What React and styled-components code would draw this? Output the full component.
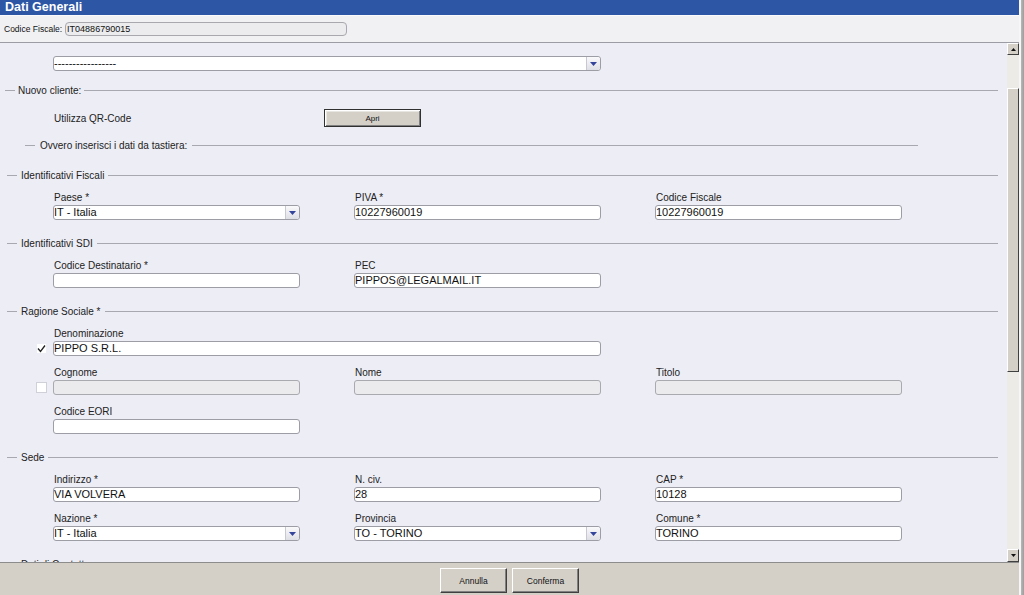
import React from 'react';
import styled, { createGlobalStyle } from 'styled-components';

const GlobalStyle = createGlobalStyle`
  html, body {
    margin: 0;
    padding: 0;
    background: #d4d0c8;
    font-family: "Liberation Sans", Arial, sans-serif;
  }
  * { box-sizing: border-box; }
`;

const Window = styled.div`
  display: flex;
  width: 1024px;
  height: 595px;
  overflow: hidden;
`;

const Main = styled.div`
  display: flex;
  flex-direction: column;
  width: 1019px;
  height: 100%;
`;

const Frame = styled.div`
  width: 5px;
  height: 100%;
  background: linear-gradient(to right, #f6f6f6 0, #f6f6f6 2px, #b8b8b8 2px, #9c9c9c 5px);
`;

const TitleBar = styled.div`
  height: 15px;
  background: #2d56a5;
  color: #fff;
  font-size: 12.5px;
  font-weight: bold;
  line-height: 14px;
  padding-left: 5px;
  white-space: nowrap;
`;

const CfBar = styled.div`
  display: flex;
  align-items: center;
  height: 28px;
  border-top: 1px solid #fafafc;
  border-bottom: 1px solid #9c9ca4;
  background: #f1f1f4;
  padding-left: 4px;
  gap: 3px;
`;

const CfLabel = styled.span`
  font-size: 8.5px;
  color: #111;
`;

const CfValue = styled.div`
  width: 282px;
  height: 14px;
  border: 1px solid #a8a8ae;
  border-radius: 4px;
  background: #ececee;
  font-size: 9px;
  line-height: 12px;
  padding-left: 1px;
  color: #111;
`;

const Body = styled.div`
  display: flex;
  flex: 1;
  min-height: 0;
`;

const Scroll = styled.div`
  flex: 1;
  overflow: hidden;
  background: #ededf5;
  padding-top: 13px;
`;

const ScrollBar = styled.div`
  display: flex;
  flex-direction: column;
  width: 12px;
  background: #ecebe5;
`;

const ArrowBtn = styled.div`
  display: flex;
  align-items: center;
  justify-content: center;
  height: ${(p) => p.$h}px;
  background: #d4d0c8;
  border-top: 1px solid #fff;
  border-left: 1px solid #fff;
  border-right: 1px solid #404040;
  border-bottom: 1px solid #404040;
`;

const TrackGap = styled.div`
  height: ${(p) => p.$h}px;
  flex: ${(p) => (p.$grow ? 1 : 'none')};
`;

const Thumb = styled.div`
  height: 284px;
  background: #d4d0c8;
  border-top: 1px solid #fff;
  border-left: 1px solid #fff;
  border-right: 1px solid #404040;
  border-bottom: 1px solid #404040;
`;

const Footer = styled.div`
  display: flex;
  justify-content: center;
  gap: 5px;
  height: 33px;
  padding-top: 5px;
  background: #d4d0c8;
  border-top: 1px solid #8c8c8c;
`;

const Button = styled.button`
  width: 67px;
  height: 25px;
  padding: 0;
  background: #d4d0c8;
  border-style: solid;
  border-width: 1px;
  border-color: #fff #404040 #404040 #fff;
  box-shadow: inset -1px -1px 0 #808080;
  font-family: "Liberation Sans", Arial, sans-serif;
  font-size: 8.5px;
  color: #111;
`;

const LegendRow = styled.div`
  display: flex;
  align-items: center;
  height: 14px;
  margin: ${(p) => p.$mt || 0}px ${(p) => p.$end}px 0 ${(p) => p.$start}px;
`;

const LegendLead = styled.span`
  width: 10px;
  border-top: 1px solid #a8a8b0;
`;

const LegendText = styled.span`
  font-size: 10px;
  color: #222;
  padding: 0 ${(p) => p.$gap}px;
  white-space: nowrap;
`;

const LegendLine = styled.span`
  flex: 1;
  border-top: 1px solid #a8a8b0;
`;

const Legend = ({ children, start = 7, end = 9, gap = 4, mt }) => (
  <LegendRow $start={start} $end={end} $mt={mt}>
    <LegendLead />
    <LegendText $gap={gap}>{children}</LegendText>
    <LegendLine />
  </LegendRow>
);

const Section = styled.div`
  display: flex;
  flex-direction: column;
  gap: 8px;
  margin-top: ${(p) => p.$mt || 0}px;
`;

const SectionRows = styled.div`
  display: flex;
  flex-direction: column;
  gap: 8px;
  margin-top: -1px;
`;

const Row = styled.div`
  display: flex;
`;

const Lead = styled.div`
  display: flex;
  align-items: flex-end;
  width: 53px;
  padding-left: 36px;
  padding-bottom: 2px;
`;

const Grid = styled.div`
  display: grid;
  grid-template-columns: repeat(3, 247px);
  column-gap: 54px;
`;

const Field = styled.div`
  display: flex;
  flex-direction: column;
  grid-column: span ${(p) => p.$span || 1};
`;

const Label = styled.div`
  height: 12px;
  line-height: 12px;
  margin-top: 3px;
  margin-bottom: 1px;
  padding-left: 1px;
  font-size: 10px;
  color: #222;
  white-space: nowrap;
`;

const Box = styled.div`
  display: flex;
  align-items: center;
  height: 15px;
  border: 1px solid ${(p) => (p.$disabled ? '#a9a9b0' : '#9d9da6')};
  border-radius: 3px;
  background: ${(p) => (p.$disabled ? '#ebebee' : '#fff')};
  font-size: 11px;
  color: #111;
  white-space: nowrap;
  overflow: hidden;
`;

const BoxText = styled.span`
  flex: 1;
  line-height: 13px;
`;

const SelArrow = styled.span`
  display: flex;
  align-items: center;
  justify-content: center;
  width: 14px;
  height: 13px;
  border-left: 1px solid #c8c8d2;
  border-radius: 0 2px 2px 0;
  background: linear-gradient(#fafafc, #dedee6);
`;

const Check = styled.span`
  display: flex;
  align-items: center;
  justify-content: center;
  width: 11px;
  height: 11px;
  background: #fff;
  border: 1px solid ${(p) => (p.$checked ? '#ededf5' : '#d0d0d8')};
`;

const QrRow = styled.div`
  display: flex;
  align-items: center;
  height: 18px;
  margin-top: 12px;
  padding-left: 54px;
`;

const QrLabel = styled.span`
  width: 270px;
  font-size: 10px;
  color: #222;
`;

const OpenButton = styled.button`
  width: 97px;
  height: 18px;
  padding: 0;
  background: #d4d0c8;
  border: 1px solid #303030;
  box-shadow: inset 1px 1px 0 #fff, inset -1px -1px 0 #808080, inset 2px 2px 0 #e8e6e0;
  font-family: "Liberation Sans", Arial, sans-serif;
  font-size: 8px;
  color: #111;
`;

const Triangle = ({ up, color = '#111', w = 7, h = 4 }) => (
  <svg width={w} height={h} viewBox="0 0 7 4">
    {up ? <path d="M0 4 L3.5 0 L7 4 Z" fill={color} /> : <path d="M0 0 L7 0 L3.5 4 Z" fill={color} />}
  </svg>
);

const Input = ({ value = '', disabled }) => (
  <Box $disabled={disabled}>
    <BoxText>{value}</BoxText>
  </Box>
);

const Select = ({ value }) => (
  <Box>
    <BoxText>{value}</BoxText>
    <SelArrow>
      <Triangle color="#33449a" w={7} h={4} />
    </SelArrow>
  </Box>
);

const CheckBox = ({ checked }) => (
  <Check $checked={checked}>
    {checked && (
      <svg width="9" height="9" viewBox="0 0 9 9">
        <path d="M1 4.5 L3.5 7.5 L8 1.5" stroke="#222" strokeWidth="1.3" fill="none" />
      </svg>
    )}
  </Check>
);

const F = ({ label, children, span }) => (
  <Field $span={span}>
    <Label>{label}</Label>
    {children}
  </Field>
);

export default function App() {
  return (
    <>
      <GlobalStyle />
      <Window>
        <Main>
          <TitleBar>Dati Generali</TitleBar>
          <CfBar>
            <CfLabel>Codice Fiscale:</CfLabel>
            <CfValue>IT04886790015</CfValue>
          </CfBar>
          <Body>
            <Scroll>
              <Row>
                <Lead />
                <Grid>
                  <Field $span={2}>
                    <Select value="-----------------" />
                  </Field>
                </Grid>
              </Row>

              <Legend start={5} gap={3} mt={12}>Nuovo cliente:</Legend>
              <QrRow>
                <QrLabel>Utilizza QR-Code</QrLabel>
                <OpenButton>Apri</OpenButton>
              </QrRow>
              <Legend start={25} end={89} gap={5} mt={11}>Ovvero inserisci i dati da tastiera:</Legend>

              <Section $mt={16}>
                <Legend>Identificativi Fiscali</Legend>
                <SectionRows>
                  <Row>
                    <Lead />
                    <Grid>
                      <F label="Paese *"><Select value="IT - Italia" /></F>
                      <F label="PIVA *"><Input value="10227960019" /></F>
                      <F label="Codice Fiscale"><Input value="10227960019" /></F>
                    </Grid>
                  </Row>
                </SectionRows>
              </Section>

              <Section $mt={16}>
                <Legend>Identificativi SDI</Legend>
                <SectionRows>
                  <Row>
                    <Lead />
                    <Grid>
                      <F label="Codice Destinatario *"><Input /></F>
                      <F label="PEC"><Input value="PIPPOS@LEGALMAIL.IT" /></F>
                    </Grid>
                  </Row>
                </SectionRows>
              </Section>

              <Section $mt={16}>
                <Legend>Ragione Sociale *</Legend>
                <SectionRows>
                  <Row>
                    <Lead><CheckBox checked /></Lead>
                    <Grid>
                      <F label="Denominazione" span={2}><Input value="PIPPO S.R.L." /></F>
                    </Grid>
                  </Row>
                  <Row>
                    <Lead><CheckBox /></Lead>
                    <Grid>
                      <F label="Cognome"><Input disabled /></F>
                      <F label="Nome"><Input disabled /></F>
                      <F label="Titolo"><Input disabled /></F>
                    </Grid>
                  </Row>
                  <Row>
                    <Lead />
                    <Grid>
                      <F label="Codice EORI"><Input /></F>
                    </Grid>
                  </Row>
                </SectionRows>
              </Section>

              <Section $mt={16}>
                <Legend>Sede</Legend>
                <SectionRows>
                  <Row>
                    <Lead />
                    <Grid>
                      <F label="Indirizzo *"><Input value="VIA VOLVERA" /></F>
                      <F label="N. civ."><Input value="28" /></F>
                      <F label="CAP *"><Input value="10128" /></F>
                    </Grid>
                  </Row>
                  <Row>
                    <Lead />
                    <Grid>
                      <F label="Nazione *"><Select value="IT - Italia" /></F>
                      <F label="Provincia"><Select value="TO - TORINO" /></F>
                      <F label="Comune *"><Input value="TORINO" /></F>
                    </Grid>
                  </Row>
                </SectionRows>
              </Section>

              <Section $mt={16}>
                <Legend>Dati di Contatto</Legend>
              </Section>
            </Scroll>
            <ScrollBar>
              <ArrowBtn $h={12}><Triangle up w={5} h={3} /></ArrowBtn>
              <TrackGap $h={33} />
              <Thumb />
              <TrackGap $grow />
              <ArrowBtn $h={13}><Triangle w={5} h={3} /></ArrowBtn>
            </ScrollBar>
          </Body>
          <Footer>
            <Button>Annulla</Button>
            <Button>Conferma</Button>
          </Footer>
        </Main>
        <Frame />
      </Window>
    </>
  );
}
